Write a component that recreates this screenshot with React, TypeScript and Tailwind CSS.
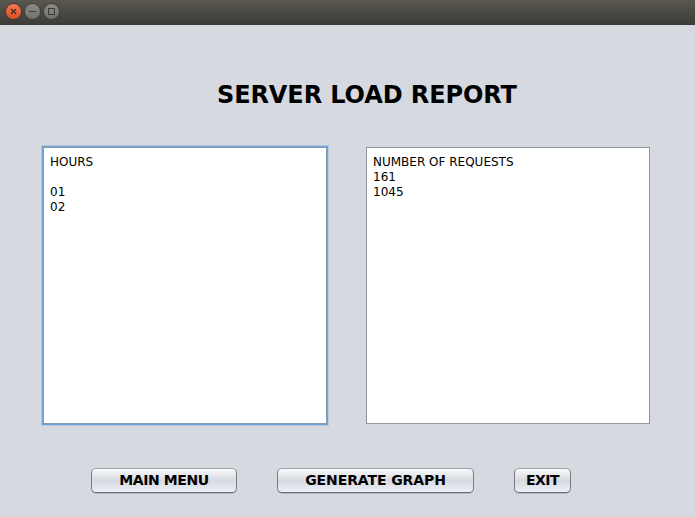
const btn = "h-[25px] shrink-0 rounded-[5px] border border-x-[#777a80] border-t-[#a0a3a9] border-b-[#66696f] bg-linear-to-b from-[#f8f9fa] via-[#d7dae1] to-[#eceff5] text-[14px] leading-[21px] font-bold whitespace-nowrap shadow-[0_1px_0_#b5b8c0]";

export default function App() {
  return (
    <div className="flex h-[517px] w-[695px] flex-col overflow-hidden bg-[#d6d9df] font-['DejaVu_Sans',sans-serif] text-black">
      <header className="flex h-[25px] shrink-0 items-start bg-linear-to-b from-[#59574f] to-[#3c3b37] pt-[3px] pl-[5px]">
        <svg width="60" height="18" viewBox="0 0 60 18">
          <defs>
            <linearGradient id="close" x1="0" y1="0" x2="0" y2="1">
              <stop stopColor="#f47b55" />
              <stop offset="1" stopColor="#df4d20" />
            </linearGradient>
            <linearGradient id="gray" x1="0" y1="0" x2="0" y2="1">
              <stop stopColor="#8d8b84" />
              <stop offset="1" stopColor="#706f69" />
            </linearGradient>
          </defs>
          <circle cx="8.5" cy="8.5" r="8" fill="url(#close)" stroke="#3b3833" />
          <path d="M6 6l5 5m0-5l-5 5" stroke="#4b2c20" strokeWidth="1.3" />
          <circle cx="27.5" cy="8.5" r="8" fill="url(#gray)" stroke="#3b3a36" />
          <path d="M24 8.5h7" stroke="#3c3b37" />
          <circle cx="46.5" cy="8.5" r="8" fill="url(#gray)" stroke="#3b3a36" />
          <rect x="43.5" y="5.5" width="6" height="6" fill="none" stroke="#3c3b37" />
        </svg>
      </header>
      <h1 className="mt-[55px] ml-[217px] h-[30px] text-[24px] leading-[30px] font-bold tracking-[-0.1px] whitespace-nowrap">SERVER LOAD REPORT</h1>
      <main className="mt-[37px] ml-[43px] flex h-[277px] items-start text-[12px] leading-[15px]">
        <section className="h-[277px] w-[284px] border border-[#8199b5] bg-white pt-[7px] pl-[6px] whitespace-pre shadow-[0_0_0_1px_#73a4d1,0_0_0_2px_#b5c8dc]">{"HOURS\n\n01\n02"}</section>
        <section className="ml-[39px] h-[277px] w-[284px] border border-[#9297a1] bg-white pt-[7px] pl-[6px] whitespace-pre">{"NUMBER OF REQUESTS\n161\n1045"}</section>
      </main>
      <footer className="mt-[44px] ml-[91px] flex">
        <button className={btn + " w-[146px] tracking-[-0.4px]"}>MAIN MENU</button>
        <button className={btn + " ml-[40px] w-[197px] tracking-[-0.1px]"}>GENERATE GRAPH</button>
        <button className={btn + " ml-[40px] w-[57px] tracking-[-0.5px]"}>EXIT</button>
      </footer>
    </div>
  );
}
